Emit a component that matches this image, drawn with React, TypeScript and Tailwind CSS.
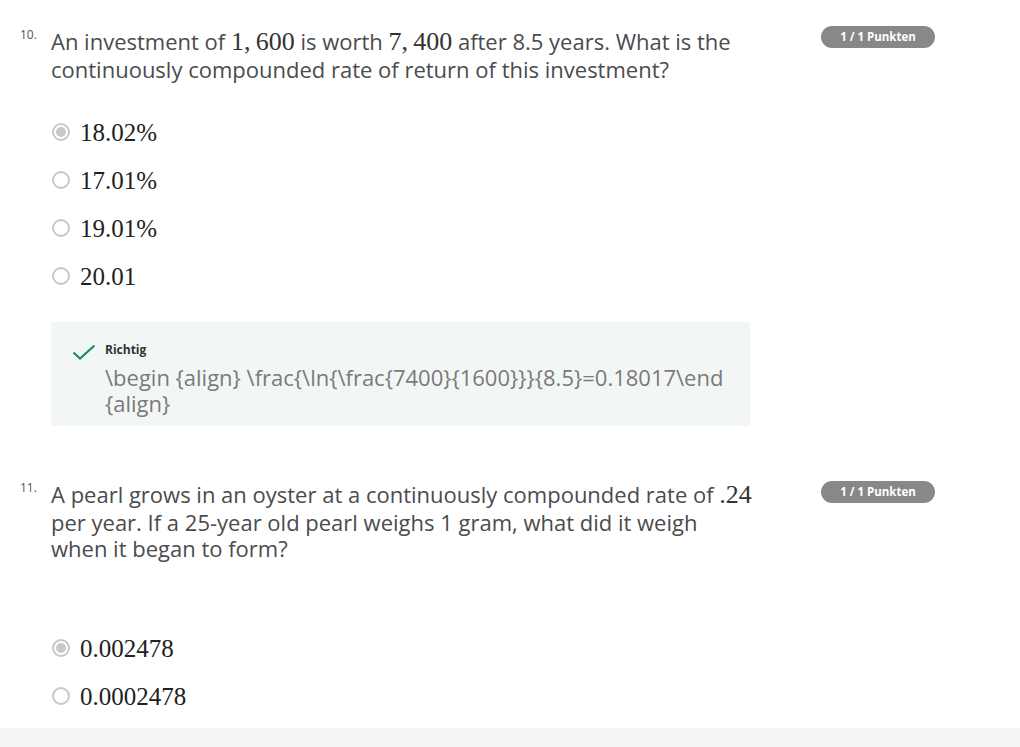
import type { ReactNode } from "react";

const sans = { fontFamily: '"Open Sans", "Noto Sans", sans-serif' };

function M({ children }: { children: ReactNode }) {
  return (
    <span className="font-['Liberation_Serif','DejaVu_Serif',serif] text-[26px] leading-[29px] text-[#333]">
      {children}
    </span>
  );
}

function Radio({ checked }: { checked?: boolean }) {
  return (
    <span className="flex h-[18px] w-[18px] shrink-0 items-center justify-center rounded-full border-2 border-[#c8c8c8]">
      {checked && <span className="h-[10px] w-[10px] rounded-full bg-[#c8c8c8]" />}
    </span>
  );
}

function Option({ label, checked }: { label: string; checked?: boolean }) {
  return (
    <div className="flex h-[48px] items-center gap-[10px] pl-px">
      <Radio checked={checked} />
      <span className="font-['Liberation_Serif','DejaVu_Serif',serif] text-[25px] leading-none text-[#222]">
        {label}
      </span>
    </div>
  );
}

function Badge() {
  return (
    <div className="flex h-[22px] w-[114px] items-center justify-center rounded-full bg-[#888] text-[11.5px] font-bold text-white">
      1 / 1 Punkten
    </div>
  );
}

function Question({
  num,
  children,
  top,
  badgeOffset,
}: {
  num: string;
  children: ReactNode;
  top: ReactNode;
  badgeOffset: string;
}) {
  return (
    <div className="flex">
      <div className="w-[51px] shrink-0 pl-[20px] pt-[2px] text-[12px] leading-none text-[#555]">{num}</div>
      <div className="w-[706px] shrink-0">
        <div className="text-[22px] leading-[26px] text-[#4a4c4e]">{top}</div>
        {children}
      </div>
      <div className="ml-[64px]">
        <div className={badgeOffset}>
          <Badge />
        </div>
      </div>
    </div>
  );
}

export default function App() {
  return (
    <div className="flex min-h-[747px] w-[1020px] flex-col bg-white" style={sans}>
      <div className="flex-1 pt-[27px]">
        <Question
          num="10."
          badgeOffset="-mt-[1px]"
          top={
            <>
              An investment of <M>1,&thinsp;600</M> is worth <M>7,&thinsp;400</M> after 8.5 years. What is the
              continuously compounded rate of return of this investment?
            </>
          }
        >
          <div className="mt-[26px]">
            <Option label="18.02%" checked />
            <Option label="17.01%" />
            <Option label="19.01%" />
            <Option label="20.01" />
          </div>
          <div className="mt-[22px] w-[699px] bg-[#f2f7f5] pb-[10px] pl-[21px] pt-[20px]">
            <div className="flex items-start gap-[9px]">
              <svg width="24" height="16" viewBox="0 0 24 16" className="mt-[2px] shrink-0">
                <path d="M1.5 8.5 L8 14.5 L22.5 1.5" fill="none" stroke="#1e8c4e" strokeWidth="2.2" />
              </svg>
              <div>
                <div className="text-[12px] font-bold leading-[16px] text-[#333]">Richtig</div>
                <div className="mt-[6px] pr-[20px] text-[22px] leading-[26px] text-[#7a7a7a]">
                  \begin {"{align}"} \frac{"{\\ln{\\frac{7400}{1600}}}{8.5}"}=0.18017\end {"{align}"}
                </div>
              </div>
            </div>
          </div>
        </Question>

        <div className="mt-[54px]">
          <Question
            num="11."
            badgeOffset="mt-[1px]"
            top={
              <>
                A pearl grows in an oyster at a continuously compounded rate of <M>.24</M> per year. If a 25-year old
                pearl weighs 1 gram, what did it weigh when it began to form?
              </>
            }
          >
            <div className="mt-[63px]">
              <Option label="0.002478" checked />
              <Option label="0.0002478" />
            </div>
          </Question>
        </div>
      </div>
      <div className="h-[19px] bg-[#f5f5f5]" />
    </div>
  );
}
